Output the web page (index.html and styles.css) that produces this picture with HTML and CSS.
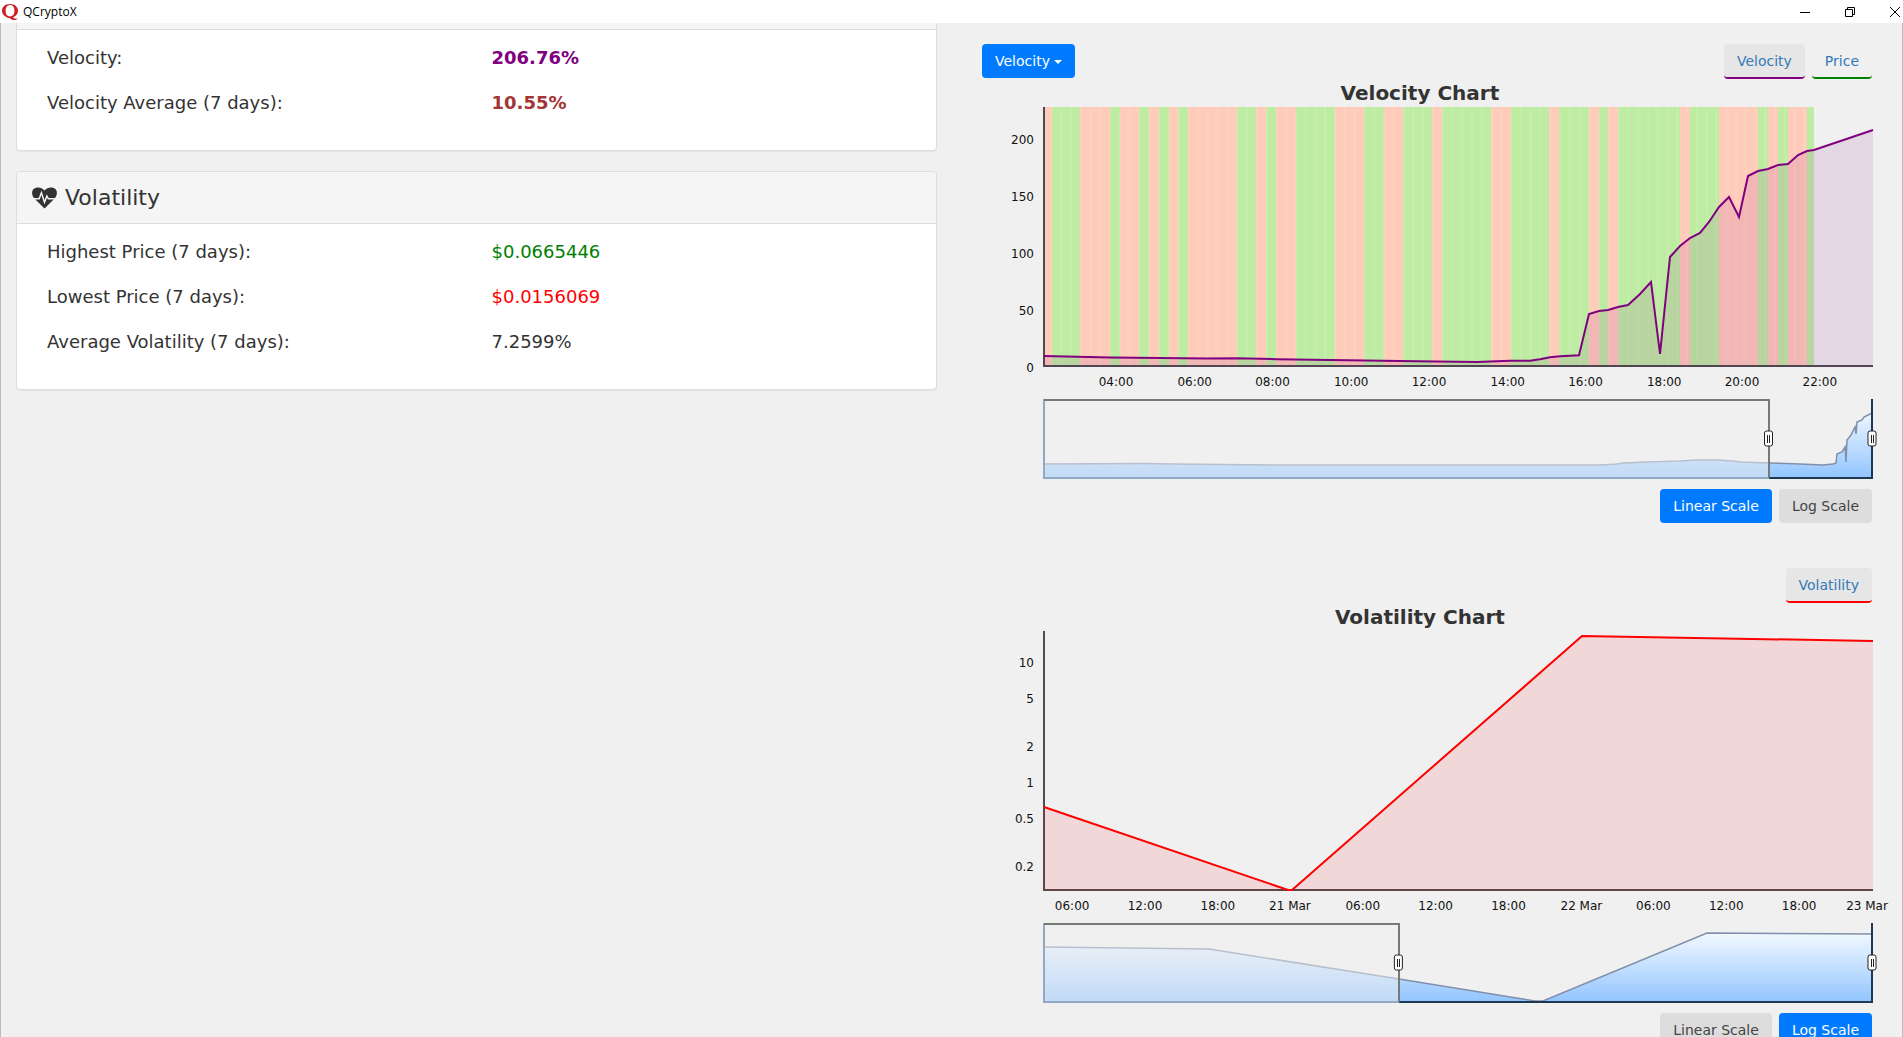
FILE: index.html
```html
<!DOCTYPE html>
<html lang="en">
<head>
<meta charset="utf-8">
<title>QCryptoX</title>
<link rel="stylesheet" href="styles.css">
</head>
<body>
<header class="titlebar">
  <svg class="logo" viewBox="0 0 16 16" aria-hidden="true">
    <path fill-rule="evenodd" d="M8 0C12.800 0 16 2.800 16 6.800C16 10 14 12.400 11 13.200C12 14.500 13.500 15 15.800 14.500C14.500 16.500 10.500 16.600 8.500 14.800C7.500 13.900 6.200 13.700 4.800 13.900L5.100 13.200C2 12.300 0 9.900 0 6.800C0 2.800 3.200 0 8 0ZM8 1.100C5.200 1.100 3.600 3.200 3.600 6.800C3.600 10.400 5.200 12.500 8 12.500C10.800 12.500 12.400 10.400 12.400 6.800C12.400 3.200 10.800 1.100 8 1.100Z"/>
  </svg>
  <span class="app-name">QCryptoX</span>
  <div class="window-controls">
    <button type="button" aria-label="Minimize"><svg viewBox="0 0 10 10"><path d="M0 5.500H10"/></svg></button>
    <button type="button" aria-label="Restore"><svg viewBox="0 0 10 10"><path d="M.5 2.500H7.500V9.500H.5ZM2.500 2.500V.5H9.500V7.500H7.500"/></svg></button>
    <button type="button" aria-label="Close"><svg viewBox="0 0 10 10"><path d="M0 0L10 10M10 0L0 10"/></svg></button>
  </div>
</header>

<main class="content">
  <div class="stats">
    <section class="panel panel-scrolled">
      <div class="panel-heading"></div>
      <dl class="panel-body">
        <div class="row"><dt>Velocity:</dt><dd class="velocity">206.76%</dd></div>
        <div class="row"><dt>Velocity Average (7 days):</dt><dd class="average">10.55%</dd></div>
      </dl>
    </section>

    <section class="panel">
      <h2 class="panel-heading">
        <svg class="heart" viewBox="0 0 26 22" aria-hidden="true">
          <path class="heart-shape" d="M13 22L2.500 11.500C-.6 8.300-.6 3.600 2 1.500C5.500-1.200 10-.2 13 3.200C16-.2 20.500-1.200 24 1.500C26.600 3.600 26.600 8.300 23.500 11.500Z"/>
          <path class="heart-pulse" d="M0 11.800H7.500L9.800 5.500L13 15.500L15.500 9L17 11.800H26"/>
        </svg>
        Volatility
      </h2>
      <dl class="panel-body">
        <div class="row"><dt>Highest Price (7 days):</dt><dd class="high">$0.0665446</dd></div>
        <div class="row"><dt>Lowest Price (7 days):</dt><dd class="low">$0.0156069</dd></div>
        <div class="row"><dt>Average Volatility (7 days):</dt><dd>7.2599%</dd></div>
      </dl>
    </section>
  </div>

  <div class="charts">
    <section class="chart">
      <div class="toolbar">
        <button type="button" class="btn btn-primary">Velocity <span class="caret"></span></button>
        <nav class="tabs">
          <a href="#velocity" class="tab tab-velocity active">Velocity</a>
          <a href="#price" class="tab tab-price">Price</a>
        </nav>
      </div>
      <svg class="plot" role="img" aria-label="Velocity Chart">
        <defs>
          <pattern id="ticks" x="7" y="0" width="9.780" height="259" patternUnits="userSpaceOnUse"><path class="seam" d="M.5 0V259"/></pattern>
          <linearGradient id="fade" gradientUnits="userSpaceOnUse" x1="0" y1="321" x2="0" y2="399"><stop offset="0" stop-color="#fff"/><stop offset="1" stop-color="#92c5ff"/></linearGradient>
        </defs>
        <text class="chart-title" x="45.400%" y="21">Velocity Chart</text>
        <svg viewBox="0 0 828 410" width="100%" height="100%" preserveAspectRatio="none">
          <path class="axis" d="M0 28V287H829"/>
          <path class="band-up" d="M1 28H770V286H1Z"/>
          <path class="band-down" d="M1 28H8V286H1ZM36 28H66V286H36ZM76 28H95V286H76ZM105 28H115V286H105ZM125 28H134V286H125ZM144 28H193V286H144ZM212 28H222V286H212ZM232 28H252V286H232ZM291 28H320V286H291ZM340 28H359V286H340ZM388 28H398V286H388ZM447 28H467V286H447ZM505 28H515V286H505ZM545 28H555V286H545ZM564 28H574V286H564ZM636 28H646V286H636ZM675 28H714V286H675ZM724 28H734V286H724ZM744 28H763V286H744Z"/>
          <path fill="url(#ticks)" d="M1 28H770V286H1Z"/>
          <path class="area-velocity" d="M0 277L66 278.500L116 279L163 279.500L193 279.300L216 279.700L233 280.300L286 281L339 281.700L373 282.300L433 283L466 281.700H486L496 280.300L506 278.300L516 277.300L535 276.300L545 235L555 232L564 231L574 228L584 226L596 215L607 203L616 275L626 178L636 167L646 159L656 154L665 143L675 128L685 118L695 138L704 97L714 92L724 90L734 86L744 85L754 76L763 72L770 71L829 51V288H0Z"/>
          <path class="line-velocity" d="M0 277L66 278.500L116 279L163 279.500L193 279.300L216 279.700L233 280.300L286 281L339 281.700L373 282.300L433 283L466 281.700H486L496 280.300L506 278.300L516 277.300L535 276.300L545 235L555 232L564 231L574 228L584 226L596 215L607 203L616 275L626 178L636 167L646 159L656 154L665 143L675 128L685 118L695 138L704 97L714 92L724 90L734 86L744 85L754 76L763 72L770 71L829 51"/>
          <path class="range-area" d="M0 399V385L100 384.500L130 385L230 386L556 386L573 385L579 384L603 383L636 382L653 381L673 381L689 382L696 383L725 384L756 385L779 386L789 385L792 384L793 375L798 373L801 368L802 383L803 361L807 356L811 348L812 355L813 343L818 341L820 338L828 334V399Z"/>
          <path class="range-line" d="M0 385L100 384.500L130 385L230 386L556 386L573 385L579 384L603 383L636 382L653 381L673 381L689 382L696 383L725 384L756 385L779 386L789 385L792 384L793 375L798 373L801 368L802 383L803 361L807 356L811 348L812 355L813 343L818 341L820 338L828 334"/>
          <path class="range-veil" d="M0 321H725V399H0Z"/>
          <path class="range-frame muted" d="M0 320V399H725"/>
          <path class="range-frame" d="M725 399H828V320"/>
          <path class="range-bracket" d="M0 321H725V399"/>
        </svg>
        <svg class="handle" x="87.500%" y="360"><rect x="-4" y="-8" width="8" height="15" rx="2"/><path d="M-1 -4V4M1 -4V4"/></svg>
        <svg class="handle" x="100%" y="360"><rect x="-4" y="-8" width="8" height="15" rx="2"/><path d="M-1 -4V4M1 -4V4"/></svg>
        <g class="y-labels">
          <text x="-10" y="65">200</text><text x="-10" y="122">150</text><text x="-10" y="179">100</text><text x="-10" y="236">50</text><text x="-10" y="293">0</text>
        </g>
        <g class="x-labels">
          <text x="8.700%" y="307">04:00</text><text x="18.200%" y="307">06:00</text><text x="27.600%" y="307">08:00</text><text x="37.100%" y="307">10:00</text><text x="46.500%" y="307">12:00</text><text x="56%" y="307">14:00</text><text x="65.400%" y="307">16:00</text><text x="74.900%" y="307">18:00</text><text x="84.300%" y="307">20:00</text><text x="93.700%" y="307">22:00</text>
        </g>
      </svg>
      <div class="scales">
        <button type="button" class="btn btn-primary">Linear Scale</button>
        <button type="button" class="btn">Log Scale</button>
      </div>
    </section>

    <section class="chart">
      <div class="toolbar">
        <nav class="tabs">
          <a href="#volatility" class="tab tab-volatility active">Volatility</a>
        </nav>
      </div>
      <svg class="plot" role="img" aria-label="Volatility Chart">
        <text class="chart-title" x="45.400%" y="21">Volatility Chart</text>
        <svg viewBox="0 0 828 410" width="100%" height="100%" preserveAspectRatio="none">
          <path class="axis" d="M0 28V287H829"/>
          <path class="area-volatility" d="M-1 204L244 287H248L538 33L829 38V288H-1Z"/>
          <path class="line-volatility" d="M0 204L244 287H248L538 33L829 38"/>
          <path class="range-area" d="M0 399V344L165 346L355 376L491 398H499L663 330L828 331V399Z"/>
          <path class="range-line" d="M0 344L165 346L355 376L491 398H499L663 330L828 331"/>
          <path class="range-veil" d="M0 321H355V399H0Z"/>
          <path class="range-frame muted" d="M0 320V399H355"/>
          <path class="range-frame" d="M355 399H828V320"/>
          <path class="range-bracket" d="M0 321H355V399"/>
        </svg>
        <svg class="handle" x="42.800%" y="360"><rect x="-4" y="-8" width="8" height="15" rx="2"/><path d="M-1 -4V4M1 -4V4"/></svg>
        <svg class="handle" x="100%" y="360"><rect x="-4" y="-8" width="8" height="15" rx="2"/><path d="M-1 -4V4M1 -4V4"/></svg>
        <g class="y-labels">
          <text x="-10" y="64">10</text><text x="-10" y="100">5</text><text x="-10" y="148">2</text><text x="-10" y="184">1</text><text x="-10" y="220">0.5</text><text x="-10" y="268">0.2</text>
        </g>
        <g class="x-labels">
          <text x="3.400%" y="307">06:00</text><text x="12.200%" y="307">12:00</text><text x="21%" y="307">18:00</text><text x="29.700%" y="307">21 Mar</text><text x="38.500%" y="307">06:00</text><text x="47.300%" y="307">12:00</text><text x="56.100%" y="307">18:00</text><text x="64.900%" y="307">22 Mar</text><text x="73.600%" y="307">06:00</text><text x="82.400%" y="307">12:00</text><text x="91.200%" y="307">18:00</text><text x="99.400%" y="307">23 Mar</text>
        </g>
      </svg>
      <div class="scales">
        <button type="button" class="btn">Linear Scale</button>
        <button type="button" class="btn btn-primary">Log Scale</button>
      </div>
    </section>
  </div>
</main>
</body>
</html>
```
FILE: styles.css
```css
* { box-sizing: border-box; }

body {
  margin: 0;
  height: 100vh;
  display: flex;
  flex-direction: column;
  overflow: hidden;
  background: #f0f0f0;
  color: #333;
  font-family: Verdana, "DejaVu Sans", sans-serif;
  font-size: 18px;
}

.titlebar {
  flex: none;
  display: flex;
  align-items: center;
  gap: 5px;
  height: 23px;
  padding: 0 3px 0 2px;
  background: #fff;
  color: #000;
  font: 12px/16px "Open Sans", sans-serif;
}
.logo { width: 16px; height: 16px; fill: #cb2026; }
.window-controls { display: flex; gap: 35px; margin-left: auto; }
.window-controls button { display: flex; padding: 0; border: 0; background: none; }
.window-controls svg { width: 10px; height: 10px; fill: none; stroke: #000; overflow: visible; }

.content {
  flex: 1;
  min-height: 0;
  display: grid;
  grid-template-columns: 1fr 1fr;
  column-gap: 1px;
  overflow: hidden;
  border: solid #bbb;
  border-width: 0 1px;
}

.stats { padding: 0 14px 0 15px; }

.panel {
  margin-bottom: 20px;
  border: 1px solid #ddd;
  border-radius: 4px;
  background: #fff;
  box-shadow: 0 1px 1px rgba(0, 0, 0, .05);
}
.panel-heading {
  display: flex;
  align-items: center;
  gap: 8px;
  height: 52px;
  margin: 0;
  padding: 0 15px;
  border-bottom: 1px solid #ddd;
  border-radius: 3px 3px 0 0;
  background: #f5f5f5;
  font-size: 22px;
  font-weight: 400;
}
.panel-scrolled { border-top: 0; border-radius: 0 0 4px 4px; }
.panel-scrolled .panel-heading { height: 7px; border-radius: 0; }
.panel-body { margin: 0; padding: 15px; }
.row { display: grid; grid-template-columns: 1fr 1fr; margin-bottom: 20px; line-height: 25px; }
.row dt, .row dd { margin: 0; padding: 0 15px; }
.heart { width: 25px; height: 22px; }
.heart-shape { fill: #333; }
.heart-pulse { fill: none; stroke: #f5f5f5; stroke-width: 1.5; }
.velocity { color: purple; font-weight: 700; }
.average { color: #a33535; font-weight: 700; }
.high { color: green; }
.low { color: red; }

.charts { padding: 21px 30px 0; }
.chart { margin-bottom: 45px; }
.toolbar { display: flex; align-items: flex-start; height: 35px; }
.tabs { display: flex; gap: 7px; margin-left: auto; }
.tab {
  height: 35px;
  padding: 0 13px;
  border-bottom: 2px solid;
  border-radius: 4px;
  color: #337ab7;
  font-size: 14px;
  line-height: 34px;
  text-decoration: none;
}
.tab.active { background: #e6e6e6; }
.tab-velocity { border-color: purple; }
.tab-price { border-color: green; }
.tab-volatility { border-color: red; }

.btn {
  height: 34px;
  padding: 0 13px;
  border: 0;
  border-radius: 4px;
  background: #ddd;
  color: #444;
  font: 14px/34px Verdana, "DejaVu Sans", sans-serif;
}
.btn-primary { background: #007bff; color: #fff; }
.caret {
  display: inline-block;
  border: 4px solid transparent;
  border-top-color: currentColor;
  border-bottom: 0;
  vertical-align: middle;
}
.scales { display: flex; justify-content: flex-end; gap: 7px; }

.plot { display: block; width: calc(100% - 62px); height: 410px; margin-left: 62px; }
.plot, .plot svg { overflow: visible; }
.chart-title { fill: #333; font-size: 20px; font-weight: 700; text-anchor: middle; }
.x-labels, .y-labels { fill: #111; font-size: 12px; }
.x-labels { text-anchor: middle; }
.y-labels { text-anchor: end; }
.axis { fill: none; stroke: #4d4d4d; stroke-width: 2; }
.band-up { fill: #bfeca3; }
.band-down { fill: #ffccba; }
.seam { stroke: #fff; stroke-opacity: .18; }
.area-velocity { fill: purple; fill-opacity: .1; }
.area-volatility { fill: red; fill-opacity: .1; }
.line-velocity, .line-volatility { fill: none; stroke-width: 2; }
.line-velocity { stroke: purple; }
.line-volatility { stroke: red; }
.range-area { fill: url(#fade); }
.range-line { fill: none; stroke: #808fab; stroke-width: 1.5; }
.range-frame { fill: none; stroke: #1c3853; stroke-width: 2; }
.range-frame.muted { stroke: #91a9c4; }
.range-veil { fill: #f0f0f0; fill-opacity: .5; }
.range-bracket { fill: none; stroke: #757a75; stroke-width: 2; }
.handle rect { fill: #fff; stroke: #222; }
.handle path { stroke: #222; shape-rendering: crispEdges; }
```
